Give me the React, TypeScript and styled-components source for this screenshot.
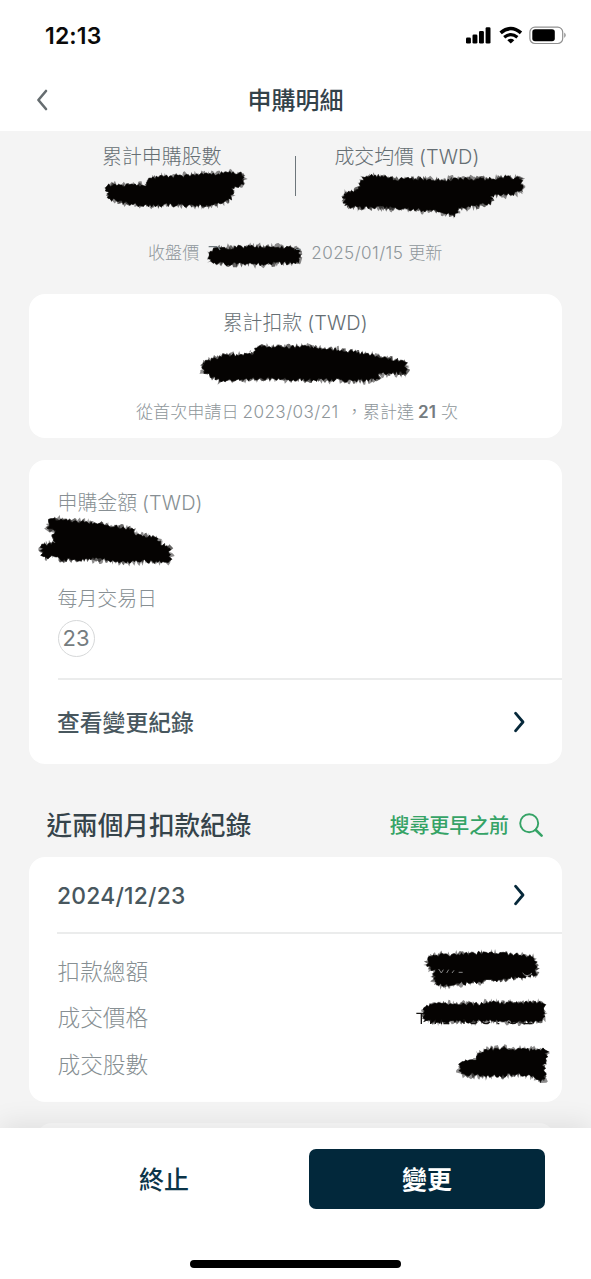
import React from "react";
import styled, { createGlobalStyle } from "styled-components";

const GlobalStyle = createGlobalStyle`
  * { box-sizing: border-box; }
  body {
    margin: 0;
    background: #fff;
    font-family: Inter, "Noto Sans CJK TC", sans-serif;
  }
`;

const Screen = styled.div`
  width: 591px;
  height: 1279px;
  display: flex;
  flex-direction: column;
  overflow: hidden;
  background: #fff;
`;

const StatusBar = styled.div`
  height: 69px;
  flex: none;
  display: flex;
  justify-content: space-between;
  align-items: flex-start;
  padding: 20px 24px 0 45px;
`;

const Clock = styled.span`
  font-size: 23px;
  line-height: 32px;
  font-weight: 600;
  letter-spacing: 0.15px;
  color: #0a0a0a;
`;

const StatusIcons = styled.svg`
  display: block;
  margin-top: 5px;
`;

const NavBar = styled.header`
  height: 62px;
  flex: none;
  display: grid;
  grid-template-columns: 80px 1fr 80px;
  align-items: center;
`;

const BackIcon = styled.svg`
  display: block;
  margin-left: 36px;
`;

const Title = styled.h1`
  margin: 0;
  padding-top: 2px;
  text-align: center;
  font-size: 24px;
  line-height: 36px;
  font-weight: 500;
  color: #33424a;
`;

const Content = styled.main`
  height: 997px;
  flex: none;
  overflow: hidden;
  background: #f4f4f4;
  padding: 14px 29px 0 28.5px;
`;

const Summary = styled.section`
  height: 91px;
  display: grid;
  grid-template-columns: 266.5px 1px 222px;
`;

const SummaryItem = styled.div`
  display: flex;
  flex-direction: column;
  align-items: center;
`;

const SummaryDivider = styled.div`
  height: 40px;
  margin-top: 11px;
  background: #6d767b;
`;

const Label = styled.div<{ $size?: number; $color?: string }>`
  font-size: ${(p) => p.$size ?? 19.9}px;
  line-height: 24px;
  font-weight: 300;
  white-space: nowrap;
  color: ${(p) => p.$color ?? "#656e73"};
`;

const Latin = styled.span<{ $ls?: number; $gap?: number; $weight?: number; $color?: string }>`
  letter-spacing: ${(p) => p.$ls ?? 0}px;
  margin-left: ${(p) => p.$gap ?? 0}px;
  font-weight: ${(p) => p.$weight ?? 300};
  color: ${(p) => p.$color ?? "inherit"};
`;

const Note = styled.div<{ $indent: number }>`
  display: flex;
  align-items: center;
  height: 34px;
  padding-left: ${(p) => p.$indent}px;
  font-size: 17.1px;
  line-height: 24px;
  font-weight: 300;
  white-space: nowrap;
  color: #8e969a;
`;

const Card = styled.section<{ $height: number; $top: number }>`
  height: ${(p) => p.$height}px;
  margin-top: ${(p) => p.$top}px;
  border-radius: 16px;
  background: #fff;
`;

const TotalCard = styled(Card)`
  display: flex;
  flex-direction: column;
  align-items: center;
  padding-top: 17px;
`;

const NextCard = styled(Card)`
  margin-left: 7px;
  margin-right: 7px;
  background: #fafafa;
`;

const NoteWrap = styled.div`
  align-self: stretch;
  margin-top: 11px;
`;

const PlanBody = styled.div`
  height: 220px;
  margin-left: 29px;
  padding-top: 31px;
  border-bottom: 2px solid #ebecec;
`;

const DayLabel = styled.div`
  margin-top: 22px;
`;

const DayBadge = styled.div`
  width: 37px;
  height: 37px;
  margin-top: 9px;
  padding-bottom: 1px;
  border: 1px solid #d6d8d9;
  border-radius: 50%;
  display: flex;
  align-items: center;
  justify-content: center;
  font-size: 22px;
  line-height: 24px;
  color: #757c80;
`;

const LinkRow = styled.div<{ $height: number; $divided?: boolean }>`
  height: ${(p) => p.$height}px;
  margin-left: 28.5px;
  padding-right: 36px;
  display: flex;
  align-items: center;
  justify-content: space-between;
  font-size: 22.8px;
  line-height: 30px;
  font-weight: 500;
  color: #48575e;
  border-bottom: ${(p) => (p.$divided ? "2px solid #ebecec" : "none")};
`;

const RowText = styled.span`
  padding-top: 2px;
`;

const SectionHead = styled.div`
  height: 93px;
  padding: 29px 19px 0 18px;
  display: flex;
  justify-content: space-between;
  align-items: center;
`;

const SectionTitle = styled.h2`
  margin: 0;
  padding-top: 2px;
  font-size: 25.6px;
  line-height: 36px;
  font-weight: 500;
  color: #36444b;
`;

const SearchLink = styled.div`
  display: flex;
  align-items: center;
  gap: 10px;
  font-size: 19.9px;
  line-height: 30px;
  font-weight: 500;
  color: #35a366;
`;

const Records = styled.div`
  padding: 14px 0 0 29px;
`;

const RecordRow = styled.div`
  height: 46.5px;
  display: flex;
  justify-content: space-between;
  align-items: center;
`;

const RecordLabel = styled(Label)`
  padding-top: 1px;
  font-size: 22.7px;
  color: #878f93;
`;

const Footer = styled.footer`
  flex: 1;
  position: relative;
  background: #fff;
  box-shadow: 0 -4px 26px rgba(0, 0, 0, 0.09);
`;

const Actions = styled.div`
  display: grid;
  grid-template-columns: 236px 236px;
  column-gap: 27px;
  padding: 21px 0 0 46px;
`;

const ActionButton = styled.button<{ $primary?: boolean }>`
  height: 60px;
  border: 0;
  border-radius: 7px;
  padding: 2px 0 0;
  font-family: inherit;
  font-size: 25px;
  line-height: 36px;
  font-weight: ${(p) => (p.$primary ? 700 : 500)};
  color: ${(p) => (p.$primary ? "#fff" : "#0b3448")};
  background: ${(p) => (p.$primary ? "#02283b" : "transparent")};
`;

const HomeIndicator = styled.div`
  width: 211px;
  height: 8px;
  margin: 51px auto 0;
  border-radius: 4px;
  background: #000;
`;

const Ink = styled.svg<{ $top: number; $left: number; $right: number }>`
  display: block;
  flex: none;
  overflow: visible;
  margin: ${(p) => `${p.$top}px ${p.$right}px 0 ${p.$left}px`};
`;

const RowInk = styled(Ink)`
  align-self: flex-start;
`;

type Point = [number, number];

// Small seeded generator so every stroke keeps the same ragged edge.
const seeded = (seed: number) => () => {
  seed = (seed * 1664525 + 1013904223) % 4294967296;
  return seed / 4294967296;
};

const ragged = (points: Point[], seed: number, amount: number) => {
  const rand = seeded(seed);
  const out: string[] = [];
  points.forEach(([x1, y1], i) => {
    const [x2, y2] = points[(i + 1) % points.length];
    const len = Math.hypot(x2 - x1, y2 - y1);
    const steps = Math.max(1, Math.round(len / 5));
    for (let s = 0; s < steps; s++) {
      const t = s / steps;
      const j = (rand() - 0.4) * 2 * amount;
      const nx = (y2 - y1) / len;
      const ny = -(x2 - x1) / len;
      out.push(`${(x1 + (x2 - x1) * t + nx * j).toFixed(1)},${(y1 + (y2 - y1) * t + ny * j).toFixed(1)}`);
    }
  });
  return out.join(" ");
};

type ScribbleProps = {
  box: [number, number, number, number];
  outline: string;
  top?: number;
  left?: number;
  right?: number;
  row?: boolean;
  children?: React.ReactNode;
};

// A crayon-like stroke: a solid core with two fainter, rougher fringes.
const Scribble = ({ box, outline, top = 0, left = 0, right = 0, row, children }: ScribbleProps) => {
  const pts = outline.split(" ").map((p) => p.split(",").map(Number) as Point);
  const Svg = row ? RowInk : Ink;
  return (
    <Svg $top={top} $left={left} $right={right} width={box[2] / 3} height={box[3] / 3} viewBox={box.join(" ")} aria-hidden>
      <polygon points={ragged(pts, 11 + box[0], 13)} fill="#050302" opacity={0.45} />
      <polygon points={ragged(pts, 47 + box[1], 10)} fill="#050302" opacity={0.6} />
      <polygon points={ragged(pts, 83 + box[2], 6)} fill="#050302" stroke="#050302" strokeWidth="2" />
      {children}
    </Svg>
  );
};

const Chevron = () => (
  <svg width="13" height="22" viewBox="0 0 13 22" fill="none">
    <path d="M2.5 2.2 L10 11 L2.5 19.8" stroke="#06283a" strokeWidth="2.8" strokeLinecap="round" strokeLinejoin="round" />
  </svg>
);

export default function App() {
  return (
    <>
      <GlobalStyle />
      <Screen>
        <StatusBar>
          <Clock>12:13</Clock>
          <StatusIcons width="102" height="22" viewBox="0 0 102 22">
            <rect x="1" y="12.5" width="4.9" height="6" rx="1.3" />
            <rect x="7.5" y="9.5" width="4.9" height="9" rx="1.3" />
            <rect x="14" y="6" width="4.9" height="12.5" rx="1.3" />
            <rect x="20.6" y="2.2" width="4.9" height="16.3" rx="1.3" />
            <path d="M35.6 7.8 Q45.8 -0.8 56 7.8" fill="none" stroke="#000" strokeWidth="3.6" />
            <path d="M39.2 12.2 Q45.8 7 52.4 12.2" fill="none" stroke="#000" strokeWidth="3.3" />
            <path d="M42.3 15.2 Q45.8 12.4 49.3 15.2 L45.8 18.6 Z" />
            <rect x="64.9" y="2.1" width="32.8" height="16.4" rx="5" fill="none" stroke="#919191" strokeWidth="1.2" />
            <rect x="67.3" y="4.3" width="22.5" height="12" rx="2.8" />
            <path d="M99.4 7.6 Q101.8 10.3 99.4 13 Z" fill="#777" />
          </StatusIcons>
        </StatusBar>
        <NavBar>
          <BackIcon width="12" height="22" viewBox="0 0 12 22" fill="none">
            <path d="M10 2 L2.4 11 L10 20" stroke="#666d70" strokeWidth="2.6" strokeLinecap="round" strokeLinejoin="round" />
          </BackIcon>
          <Title>申購明細</Title>
        </NavBar>

        <Content>
          <Summary>
            <SummaryItem>
              <Label>累計申購股數</Label>
              <Scribble
                top={2}
                left={27}
                box={[75, 120, 420, 111]}
                outline="82,165 120,162 150,166 195,165 205,147 240,139 290,137 350,134 400,131 450,128 488,128 489,150 485,163 455,170 453,203 430,213 400,220 330,222 250,220 180,221 125,213 115,205 85,203"
              />
            </SummaryItem>
            <SummaryDivider />
            <SummaryItem>
              <Label>
                成交均價<Latin $gap={5} $ls={0.1}>(TWD)</Latin>
              </Label>
              <Scribble
                top={5}
                left={52}
                box={[96, 134, 546, 132]}
                outline="102,195 140,188 150,165 165,142 210,142 260,152 330,150 400,154 470,150 530,152 580,145 631,149 633,180 620,190 580,198 545,198 540,220 500,230 445,233 435,258 400,248 370,243 300,238 220,233 150,233 107,228"
              />
            </SummaryItem>
          </Summary>
          <Note $indent={119.5}>
            收盤價
            <Scribble
              top={3}
              left={8}
              right={9}
              box={[381, 342, 285, 66]}
              outline="388,375 400,359 440,356 500,350 540,353 590,354 640,356 656,364 657,388 640,397 580,399 500,402 430,399 395,393"
            >
              <path d="M386 350 H412 M414 350 L420 360 M648 358 H662" stroke="#6f787d" strokeWidth="4" />
            </Scribble>
            <Latin $ls={0.42}>2025/01/15</Latin>
            <Latin $gap={5}>更新</Latin>
          </Note>

          <TotalCard $height={144} $top={24}>
            <Label>
              累計扣款<Latin $gap={5} $ls={0.1}>(TWD)</Latin>
            </Label>
            <Scribble
              top={10}
              left={19}
              box={[543, 180, 621, 117]}
              outline="549,235 575,224 620,212 660,213 700,206 710,187 780,189 850,187 900,192 960,197 1020,207 1080,217 1120,224 1156,234 1158,263 1120,263 1080,265 1070,283 1000,286 920,283 840,283 740,279 640,282 600,286 580,275 552,265"
            />
            <NoteWrap>
              <Note $indent={107.5}>
                從首次申請日
                <Latin $gap={4} $ls={0.42}>2023/03/21</Latin>
                <Latin $gap={7}>，累計達</Latin>
                <Latin $gap={4} $weight={600} $color="#757c80">21</Latin>
                <Latin $gap={5}>次</Latin>
              </Note>
            </NoteWrap>
          </TotalCard>

          <Card $height={304} $top={22}>
            <PlanBody>
              <Label $color="#878f93">
                申購金額<Latin $gap={5} $ls={0.1}>(TWD)</Latin>
              </Label>
              <Scribble
                top={1}
                left={-18}
                box={[57, 183, 399, 147]}
                outline="83,202 95,192 150,198 220,208 280,215 336,225 345,240 410,250 415,266 445,280 447,318 410,320 370,318 310,319 250,312 180,310 130,314 100,305 67,305 63,272 105,264 97,245 105,227 84,220"
              />
              <DayLabel>
                <Label $color="#878f93">每月交易日</Label>
              </DayLabel>
              <DayBadge>23</DayBadge>
            </PlanBody>
            <LinkRow $height={84}>
              <RowText>查看變更紀錄</RowText>
              <Chevron />
            </LinkRow>
          </Card>

          <SectionHead>
            <SectionTitle>近兩個月扣款紀錄</SectionTitle>
            <SearchLink>
              <RowText>搜尋更早之前</RowText>
              <svg width="24" height="25" viewBox="0 0 24 25" fill="none" stroke="#35a366" strokeLinecap="round">
                <circle cx="10.2" cy="10.3" r="9" strokeWidth="1.9" />
                <path d="M16.8 17 L22.6 22.6" strokeWidth="2.6" />
              </svg>
            </SearchLink>
          </SectionHead>

          <Card $height={245} $top={0}>
            <LinkRow $height={77} $divided>
              <RowText>
                <Latin $weight={500} $ls={0.25}>2024/12/23</Latin>
              </RowText>
              <Chevron />
            </LinkRow>
            <Records>
              <RecordRow>
                <RecordLabel>扣款總額</RecordLabel>
                <Scribble
                  row
                  top={3}
                  right={23}
                  box={[135, 94, 342, 108]}
                  outline="143,120 160,108 220,107 290,102 370,103 430,110 463,113 470,163 430,170 380,176 320,183 260,188 210,195 167,195 164,152 144,140"
                >
                  <path d="M176 148 L184 160 L190 150 M200 160 L206 150 M216 160 L222 152 M236 158 H248" stroke="#888" strokeWidth="3" fill="none" />
                  <path d="M428 160 Q440 176 456 160" stroke="#999" strokeWidth="3" fill="none" />
                </Scribble>
              </RecordRow>
              <RecordRow>
                <RecordLabel>成交價格</RecordLabel>
                <Scribble
                  row
                  top={4.5}
                  right={15}
                  box={[108, 240, 393, 84]}
                  outline="132,266 160,256 220,258 280,258 340,252 400,253 440,253 490,252 492,298 470,307 400,306 300,305 200,306 138,307"
                >
                  <path
                    d="M109 283 H132 M124 283 V315 M152 302 V315 M166 302 V315 M184 302 V315 M190 314 H208 M252 300 V315 M268 308 Q280 320 292 308 M306 308 Q318 320 330 308 M352 314 H358 M384 308 Q398 320 412 308 M430 314 H458"
                    stroke="#161412"
                    strokeWidth="4"
                    fill="none"
                  />
                </Scribble>
              </RecordRow>
              <RecordRow>
                <RecordLabel>成交股數</RecordLabel>
                <Scribble
                  row
                  top={5}
                  right={13}
                  box={[235, 382, 273, 114]}
                  outline="243,432 285,427 295,408 320,395 380,392 440,396 498,394 500,420 490,435 493,478 485,487 465,473 420,465 370,469 320,471 280,467 245,465"
                />
              </RecordRow>
            </Records>
          </Card>
          <NextCard $height={245} $top={21} />
        </Content>

        <Footer>
          <Actions>
            <ActionButton>終止</ActionButton>
            <ActionButton $primary>變更</ActionButton>
          </Actions>
          <HomeIndicator />
        </Footer>
      </Screen>
    </>
  );
}
